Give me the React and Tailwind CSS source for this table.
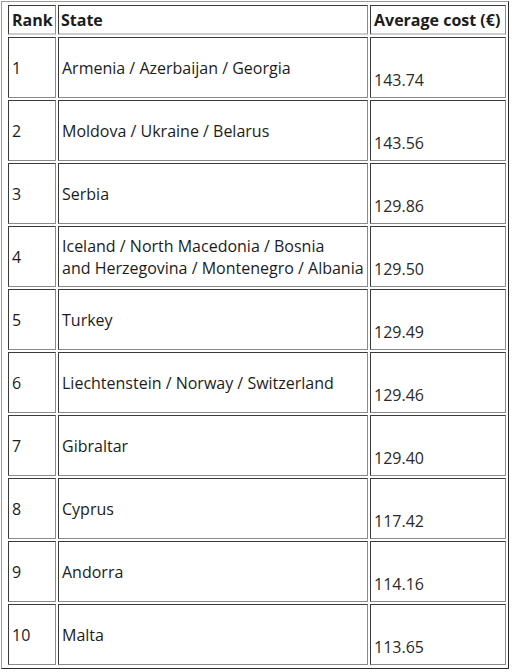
import React from "react";

const rows = [
  { rank: "1", state: ["Armenia / Azerbaijan / Georgia"], cost: "143.74" },
  { rank: "2", state: ["Moldova / Ukraine / Belarus"], cost: "143.56" },
  { rank: "3", state: ["Serbia"], cost: "129.86" },
  {
    rank: "4",
    state: ["Iceland / North Macedonia / Bosnia", "and Herzegovina / Montenegro / Albania"],
    cost: "129.50",
  },
  { rank: "5", state: ["Turkey"], cost: "129.49" },
  { rank: "6", state: ["Liechtenstein / Norway / Switzerland"], cost: "129.46" },
  { rank: "7", state: ["Gibraltar"], cost: "129.40" },
  { rank: "8", state: ["Cyprus"], cost: "117.42" },
  { rank: "9", state: ["Andorra"], cost: "114.16" },
  { rank: "10", state: ["Malta"], cost: "113.65" },
];

// inset cell border: dark top/left, grey bottom/right
const cell =
  "border border-t-[#3a3a3a] border-l-[#3a3a3a] border-r-[#8a8a8a] border-b-[#8a8a8a] px-[3px]";

const App = () => {
  return (
    <div className="w-[512px] h-[672px] bg-white pl-px pt-px">
      <div
        className="w-[508px] h-[668px] border border-t-[#9a9a9a] border-l-[#9a9a9a] border-r-[#2a2a2a] border-b-[#2a2a2a] pl-[6px] pt-[3px] pr-px"
        style={{ fontFamily: '"Open Sans", "Noto Sans", sans-serif' }}
      >
        <table className="border-separate border-spacing-x-[2px] border-spacing-y-[2px] -ml-[2px] -mt-[2px] text-[16px] leading-[22px] text-[#1c1c1c] table-fixed w-[502px]">
          <colgroup>
            <col className="w-[48px]" />
            <col className="w-[310px]" />
            <col className="w-[136px]" />
          </colgroup>
          <thead>
            <tr className="h-[30px]">
              <th className="border border-t-[#3a3a3a] border-l-[#3a3a3a] border-r-[#8a8a8a] border-b-2 border-b-[#cccccc] px-[3px] text-left font-bold align-middle">
                Rank
              </th>
              <th className="border border-t-[#3a3a3a] border-l-[#3a3a3a] border-r-[#8a8a8a] border-b-2 border-b-[#cccccc] px-[2px] text-left font-bold align-middle">
                State
              </th>
              <th className="border border-t-[#3a3a3a] border-l-[#3a3a3a] border-r-[#8a8a8a] border-b-2 border-b-[#cccccc] px-[3px] text-left font-bold align-middle whitespace-nowrap">
                Average cost (€)
              </th>
            </tr>
          </thead>
          <tbody>
            {rows.map((r) => (
              <tr key={r.rank} className="h-[61px]">
                <td className={`${cell} align-middle`}>{r.rank}</td>
                <td className={`${cell} align-middle whitespace-nowrap px-[2px]`}>
                  {r.state.map((line, i) => (
                    <div key={i}>{line}</div>
                  ))}
                </td>
                <td className={`${cell} align-bottom pb-[6px] text-[#2a2a2a]`}>{r.cost}</td>
              </tr>
            ))}
          </tbody>
        </table>
      </div>
    </div>
  );
};

export default App;
